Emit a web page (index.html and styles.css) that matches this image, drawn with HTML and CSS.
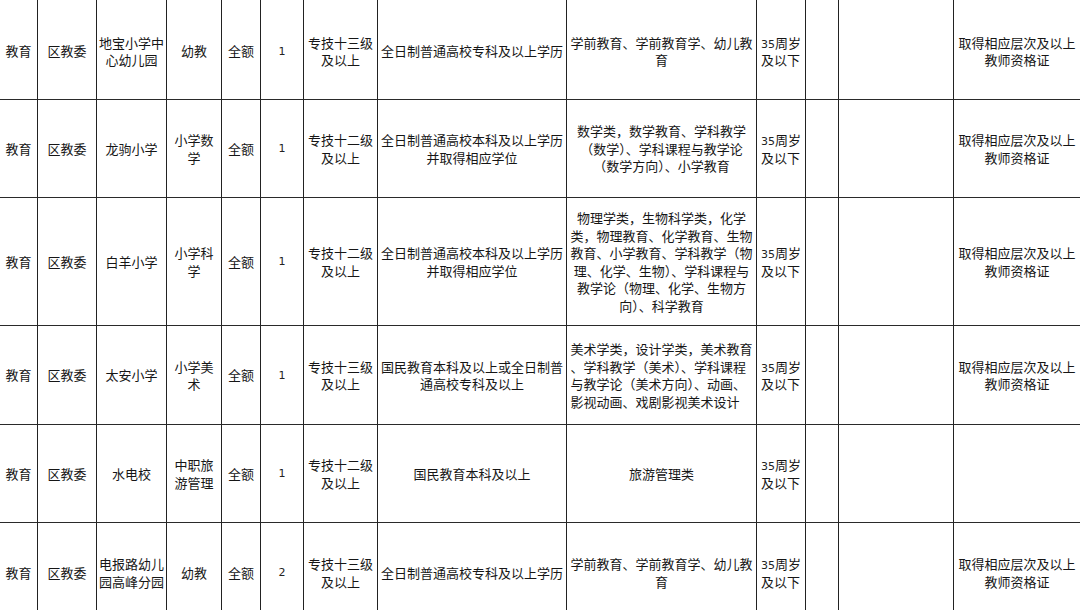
FILE: index.html
```html
<!DOCTYPE html>
<html lang="zh-CN">
<head>
<meta charset="utf-8">
<title>招聘岗位表</title>
<link rel="stylesheet" href="styles.css">
</head>
<body>
<div class="sheet">
  <!-- row 1 -->
  <div class="c r1">教育</div>
  <div class="c r1">区教委</div>
  <div class="c r1">地宝小学中<br>心幼儿园</div>
  <div class="c r1">幼教</div>
  <div class="c r1">全额</div>
  <div class="c r1"><span class="d">1</span></div>
  <div class="c r1">专技十三级<br>及以上</div>
  <div class="c r1">全日制普通高校专科及以上学历</div>
  <div class="c r1">学前教育、学前教育学、幼儿教<br>育</div>
  <div class="c r1"><p class="t"><span class="d">35</span>周岁<br>及以下</p></div>
  <div class="c r1"></div>
  <div class="c r1"></div>
  <div class="c r1">取得相应层次及以上<br>教师资格证</div>

  <!-- row 2 -->
  <div class="c">教育</div>
  <div class="c">区教委</div>
  <div class="c">龙驹小学</div>
  <div class="c">小学数<br>学</div>
  <div class="c">全额</div>
  <div class="c"><span class="d">1</span></div>
  <div class="c">专技十二级<br>及以上</div>
  <div class="c">全日制普通高校本科及以上学历<br>并取得相应学位</div>
  <div class="c">数学类，数学教育、学科教学<br>（数学）、学科课程与教学论<br>（数学方向）、小学教育</div>
  <div class="c"><p class="t"><span class="d">35</span>周岁<br>及以下</p></div>
  <div class="c"></div>
  <div class="c"></div>
  <div class="c">取得相应层次及以上<br>教师资格证</div>

  <!-- row 3 -->
  <div class="c">教育</div>
  <div class="c">区教委</div>
  <div class="c">白羊小学</div>
  <div class="c">小学科<br>学</div>
  <div class="c">全额</div>
  <div class="c"><span class="d">1</span></div>
  <div class="c">专技十二级<br>及以上</div>
  <div class="c">全日制普通高校本科及以上学历<br>并取得相应学位</div>
  <div class="c">物理学类，生物科学类，化学<br>类，物理教育、化学教育、生物<br>教育、小学教育、学科教学（物<br>理、化学、生物）、学科课程与<br>教学论（物理、化学、生物方<br>向）、科学教育</div>
  <div class="c"><p class="t"><span class="d">35</span>周岁<br>及以下</p></div>
  <div class="c"></div>
  <div class="c"></div>
  <div class="c">取得相应层次及以上<br>教师资格证</div>

  <!-- row 4 -->
  <div class="c">教育</div>
  <div class="c">区教委</div>
  <div class="c">太安小学</div>
  <div class="c">小学美<br>术</div>
  <div class="c">全额</div>
  <div class="c"><span class="d">1</span></div>
  <div class="c">专技十三级<br>及以上</div>
  <div class="c">国民教育本科及以上或全日制普<br>通高校专科及以上</div>
  <div class="c left">美术学类，设计学类，美术教育<br>、学科教学（美术）、学科课程<br>与教学论（美术方向）、动画、<br>影视动画、戏剧影视美术设计</div>
  <div class="c"><p class="t"><span class="d">35</span>周岁<br>及以下</p></div>
  <div class="c"></div>
  <div class="c"></div>
  <div class="c">取得相应层次及以上<br>教师资格证</div>

  <!-- row 5 -->
  <div class="c">教育</div>
  <div class="c">区教委</div>
  <div class="c">水电校</div>
  <div class="c">中职旅<br>游管理</div>
  <div class="c">全额</div>
  <div class="c"><span class="d">1</span></div>
  <div class="c">专技十二级<br>及以上</div>
  <div class="c">国民教育本科及以上</div>
  <div class="c">旅游管理类</div>
  <div class="c"><p class="t"><span class="d">35</span>周岁<br>及以下</p></div>
  <div class="c"></div>
  <div class="c"></div>
  <div class="c"></div>

  <!-- row 6 -->
  <div class="c">教育</div>
  <div class="c">区教委</div>
  <div class="c">电报路幼儿<br>园高峰分园</div>
  <div class="c">幼教</div>
  <div class="c">全额</div>
  <div class="c"><span class="d">2</span></div>
  <div class="c">专技十三级<br>及以上</div>
  <div class="c">全日制普通高校专科及以上学历</div>
  <div class="c">学前教育、学前教育学、幼儿教<br>育</div>
  <div class="c"><p class="t"><span class="d">35</span>周岁<br>及以下</p></div>
  <div class="c"></div>
  <div class="c"></div>
  <div class="c">取得相应层次及以上<br>教师资格证</div>
</div>
</body>
</html>
```

FILE: styles.css
```css
html, body {
  margin: 0;
  padding: 0;
  background: #ffffff;
  overflow: hidden;
}

.sheet {
  display: grid;
  grid-template-columns: 38px 59px 70px 55px 39px 43px 74px 189px 190px 49px 33px 115px 127px;
  grid-template-rows: 100px 98px 128px 99px 98px 100px;
  width: max-content;
  font-family: "Noto Sans CJK SC", "Noto Sans", sans-serif;
  font-size: 13px;
  line-height: 17.5px;
  color: #161616;
}

.c {
  box-sizing: border-box;
  border-right: 1px solid #222222;
  border-bottom: 1px solid #2a2a2a;
  display: flex;
  align-items: center;
  justify-content: center;
  text-align: center;
  padding: 0 1px;
  white-space: nowrap;
  overflow: hidden;
}

.r1 {
  padding-top: 3px;
}

.t {
  margin: 0;
  text-align: left;
}

.d {
  font-family: "DejaVu Sans", "Liberation Sans", sans-serif;
  font-size: 11px;
  line-height: 1;
  color: #222222;
}

.left {
  text-align: left;
}
```
